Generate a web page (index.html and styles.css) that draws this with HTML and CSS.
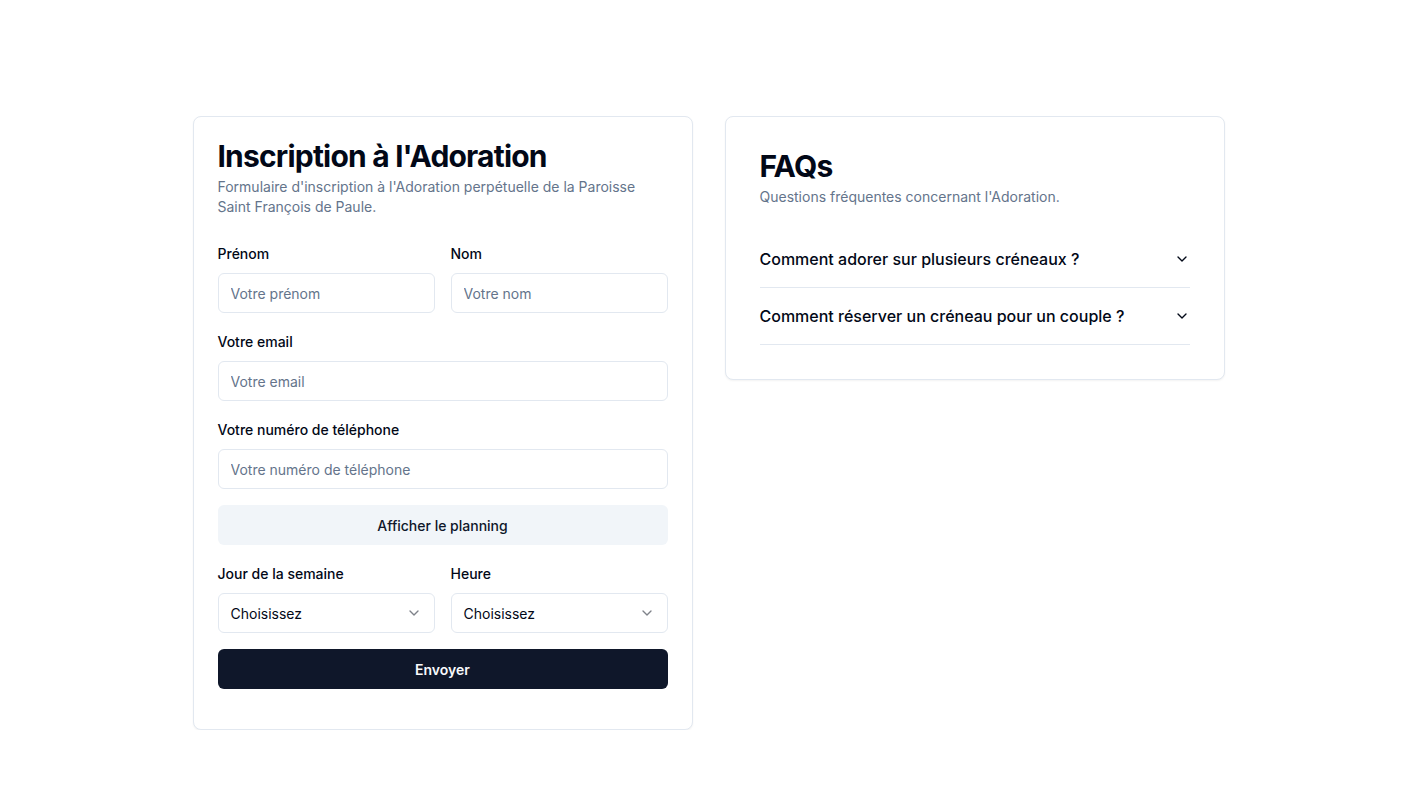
FILE: index.html
```html
<!DOCTYPE html>
<html lang="fr">
<head>
<meta charset="utf-8">
<title>Inscription à l'Adoration</title>
<link rel="stylesheet" href="styles.css">
</head>
<body>
<main class="page">
  <section class="card card-form">
    <header class="card-header">
      <h1 class="card-title">Inscription à l'Adoration</h1>
      <p class="card-desc">Formulaire d'inscription à l'Adoration perpétuelle de la Paroisse Saint François de Paule.</p>
    </header>
    <form class="form">
      <div class="row">
        <div class="field">
          <label class="label">Prénom</label>
          <input class="input" type="text" placeholder="Votre prénom">
        </div>
        <div class="field">
          <label class="label">Nom</label>
          <input class="input" type="text" placeholder="Votre nom">
        </div>
      </div>
      <div class="field">
        <label class="label">Votre email</label>
        <input class="input" type="email" placeholder="Votre email">
      </div>
      <div class="field">
        <label class="label">Votre numéro de téléphone</label>
        <input class="input" type="tel" placeholder="Votre numéro de téléphone">
      </div>
      <button type="button" class="btn btn-secondary">Afficher le planning</button>
      <div class="row row-after-btn">
        <div class="field">
          <label class="label">Jour de la semaine</label>
          <div class="select">
            <span>Choisissez</span>
            <svg class="select-icon" width="16" height="16" viewBox="0 0 24 24" fill="none" stroke="currentColor" stroke-width="2" stroke-linecap="round" stroke-linejoin="round"><path d="m6 9 6 6 6-6"/></svg>
          </div>
        </div>
        <div class="field">
          <label class="label">Heure</label>
          <div class="select">
            <span>Choisissez</span>
            <svg class="select-icon" width="16" height="16" viewBox="0 0 24 24" fill="none" stroke="currentColor" stroke-width="2" stroke-linecap="round" stroke-linejoin="round"><path d="m6 9 6 6 6-6"/></svg>
          </div>
        </div>
      </div>
      <button type="button" class="btn btn-primary">Envoyer</button>
    </form>
  </section>

  <section class="card card-faq">
    <header class="card-header">
      <h2 class="card-title">FAQs</h2>
      <p class="card-desc">Questions fréquentes concernant l'Adoration.</p>
    </header>
    <div class="accordion">
      <div class="acc-item">
        <span>Comment adorer sur plusieurs créneaux ?</span>
        <svg class="acc-icon" width="16" height="16" viewBox="0 0 24 24" fill="none" stroke="currentColor" stroke-width="2" stroke-linecap="round" stroke-linejoin="round"><path d="m6 9 6 6 6-6"/></svg>
      </div>
      <div class="acc-item">
        <span>Comment réserver un créneau pour un couple ?</span>
        <svg class="acc-icon" width="16" height="16" viewBox="0 0 24 24" fill="none" stroke="currentColor" stroke-width="2" stroke-linecap="round" stroke-linejoin="round"><path d="m6 9 6 6 6-6"/></svg>
      </div>
    </div>
  </section>
</main>
</body>
</html>
```

FILE: styles.css
```css
* { box-sizing: border-box; }
html, body { margin: 0; padding: 0; background: #ffffff; }
body {
  font-family: Inter, "Noto Sans", "Liberation Sans", sans-serif;
  color: #020817;
  -webkit-font-smoothing: antialiased;
}
.page {
  display: flex;
  align-items: flex-start;
  justify-content: center;
  gap: 32px;
  padding: 116px 0 0 8px;
}
.card {
  width: 500px;
  background: #fff;
  border: 1px solid #e2e8f0;
  border-radius: 8px;
  box-shadow: 0 1px 2px 0 rgba(0,0,0,0.05);
}
.card-form { padding: 24px 24px 40px; }
.card-faq { padding: 34px; }
.card-header { display: flex; flex-direction: column; gap: 6px; }
.card-title {
  margin: 0;
  font-size: 30px;
  line-height: 30px;
  font-weight: 700;
  letter-spacing: -0.8px;
  color: #020817;
}
.card-desc {
  margin: 0;
  font-size: 14px;
  line-height: 20px;
  color: #64748b;
}
.form {
  display: flex;
  flex-direction: column;
  margin-top: 27px;
}
.row {
  display: grid;
  grid-template-columns: 1fr 1fr;
  gap: 16px;
}
.field { display: flex; flex-direction: column; gap: 9px; }
.form > .field { margin-top: 19px; }
.row-after-btn { margin-top: 19px; }
.label {
  font-size: 14px;
  line-height: 20px;
  font-weight: 500;
  color: #020817;
}
.input, .select {
  height: 40px;
  width: 100%;
  border: 1px solid #e2e8f0;
  border-radius: 6px;
  background: #fff;
  padding: 0 12px;
  font-family: inherit;
  font-size: 14px;
  color: #020817;
  outline: none;
}
.input::placeholder { color: #64748b; }
.select {
  display: flex;
  align-items: center;
  justify-content: space-between;
}
.select-icon { color: #020817; opacity: 0.5; flex: none; }
.btn {
  height: 40px;
  width: 100%;
  border: none;
  border-radius: 6px;
  font-family: inherit;
  font-size: 14px;
  font-weight: 500;
  cursor: pointer;
}
.btn-secondary {
  background: #f1f5f9;
  color: #0f172a;
  margin-top: 16px;
}
.btn-primary {
  background: #0f172a;
  color: #f8fafc;
  font-weight: 600;
  margin-top: 16px;
}
.accordion { margin-top: 24px; }
.acc-item {
  display: flex;
  align-items: center;
  justify-content: space-between;
  padding: 16px 0;
  border-bottom: 1px solid #e2e8f0;
  font-size: 16px;
  line-height: 24px;
  font-weight: 500;
  color: #020817;
}
.acc-icon { flex: none; }
```
